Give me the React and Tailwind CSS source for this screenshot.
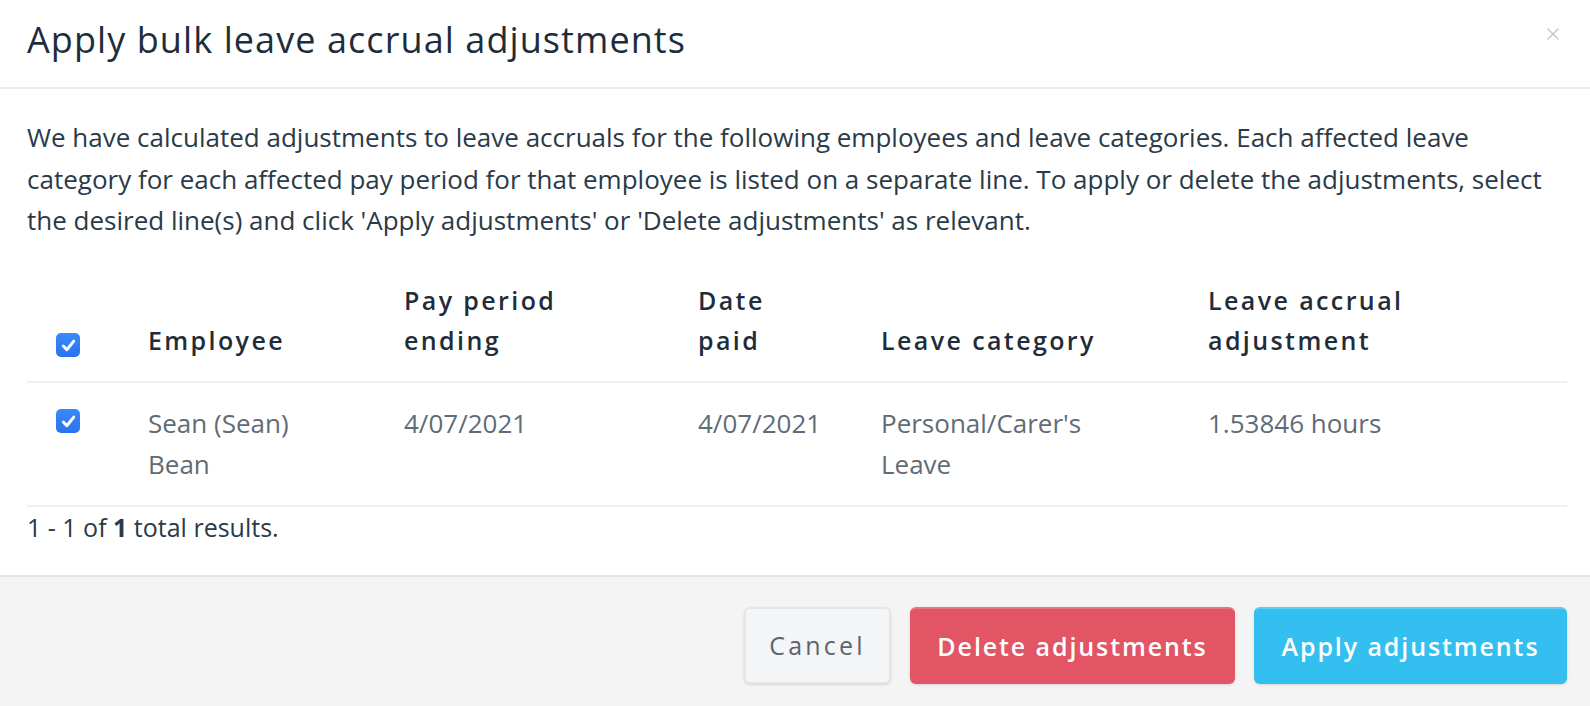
import { X } from "lucide-react";

const font = { fontFamily: "'Open Sans', Lato, sans-serif" };

function Check() {
  return (
    <span className="inline-flex h-[24px] w-[24px] items-center justify-center rounded-[5px] bg-gradient-to-b from-[#3a8af9] to-[#2a72f0]">
      <svg viewBox="0 0 16 16" className="h-[19px] w-[19px]" fill="none">
        <path d="M3.6 8.4 L6.6 11.6 L12.4 4.3" stroke="white" strokeWidth="2.5" strokeLinecap="round" strokeLinejoin="round" />
      </svg>
    </span>
  );
}

export default function App() {
  return (
    <div className="flex h-[706px] w-full flex-col bg-white text-[#2a3a48]" style={font}>
      <div className="flex h-[89px] shrink-0 items-start justify-between border-b-2 border-[#ececec] pl-[27px] pr-[27px] pt-[13px]">
        <h1 className="text-[36px] font-normal leading-[54px] tracking-[0.03em] text-[#1e2d3b]">
          Apply bulk leave accrual adjustments
        </h1>
        <X size={20} strokeWidth={1.6} className="mt-[11px] text-[#c6c6c6]" />
      </div>

      <div className="flex-1 pl-[27px] pr-[23px] pt-[28px]">
        <p className="text-[26px] leading-[41.5px]">
          We have calculated adjustments to leave accruals for the following employees and leave categories. Each affected leave
          category for each affected pay period for that employee is listed on a separate line. To apply or delete the adjustments, select
          the desired line(s) and click 'Apply adjustments' or 'Delete adjustments' as relevant.
        </p>

        <table className="mt-[18px] w-full table-fixed border-collapse">
          <colgroup>
            <col className="w-[121px]" />
            <col className="w-[256px]" />
            <col className="w-[294px]" />
            <col className="w-[183px]" />
            <col className="w-[327px]" />
            <col />
          </colgroup>
          <thead>
            <tr className="border-b-2 border-[#f1f1f1] text-left align-bottom text-[25px] leading-[40px] tracking-[2.4px] text-[#1f2d3a]">
              <th className="pb-[16px] pl-[29px] pt-[20px]">
                <Check />
              </th>
              <th className="pb-[21px] pt-[20px] font-semibold">Employee</th>
              <th className="pb-[21px] pt-[20px] font-semibold">Pay period<br />ending</th>
              <th className="pb-[21px] pt-[20px] font-semibold">Date<br />paid</th>
              <th className="pb-[21px] pt-[20px] font-semibold">Leave category</th>
              <th className="pb-[21px] pt-[20px] font-semibold">Leave accrual<br />adjustment</th>
            </tr>
          </thead>
          <tbody>
            <tr className="border-b-2 border-[#f1f1f1] align-top text-[26px] leading-[41px] text-[#5f6b76]">
              <td className="pl-[29px] pt-[18px]">
                <Check />
              </td>
              <td className="py-[20px]">Sean (Sean)<br />Bean</td>
              <td className="py-[20px]">4/07/2021</td>
              <td className="py-[20px]">4/07/2021</td>
              <td className="py-[20px]">Personal/Carer's<br />Leave</td>
              <td className="py-[20px]">1.53846 hours</td>
            </tr>
          </tbody>
        </table>

        <p className="text-[25px] leading-[41px] text-[#2a3a48]">
          1 - 1 of <span className="font-bold">1</span> total results.
        </p>
      </div>

      <div className="flex h-[131px] shrink-0 items-start justify-end gap-[19px] border-t-2 border-[#e4e4e4] bg-[#f4f4f4] pr-[23px] pt-[30px]">
        <button className="h-[77px] w-[147px] rounded-[6px] border-2 border-[#e3e5e8] bg-[#f4f5f7] text-[25px] tracking-[3.2px] text-[#5b6570] shadow-sm">
          Cancel
        </button>
        <button className="h-[77px] w-[325px] rounded-[6px] border-t-2 border-[#ea7581] bg-[#e25565] text-[25px] font-semibold tracking-[1.9px] text-white shadow-sm">
          Delete adjustments
        </button>
        <button className="h-[77px] w-[313px] rounded-[6px] border-t-2 border-[#5ccdf3] bg-[#33bfef] text-[25px] font-semibold tracking-[1.9px] text-white shadow-sm">
          Apply adjustments
        </button>
      </div>
    </div>
  );
}
